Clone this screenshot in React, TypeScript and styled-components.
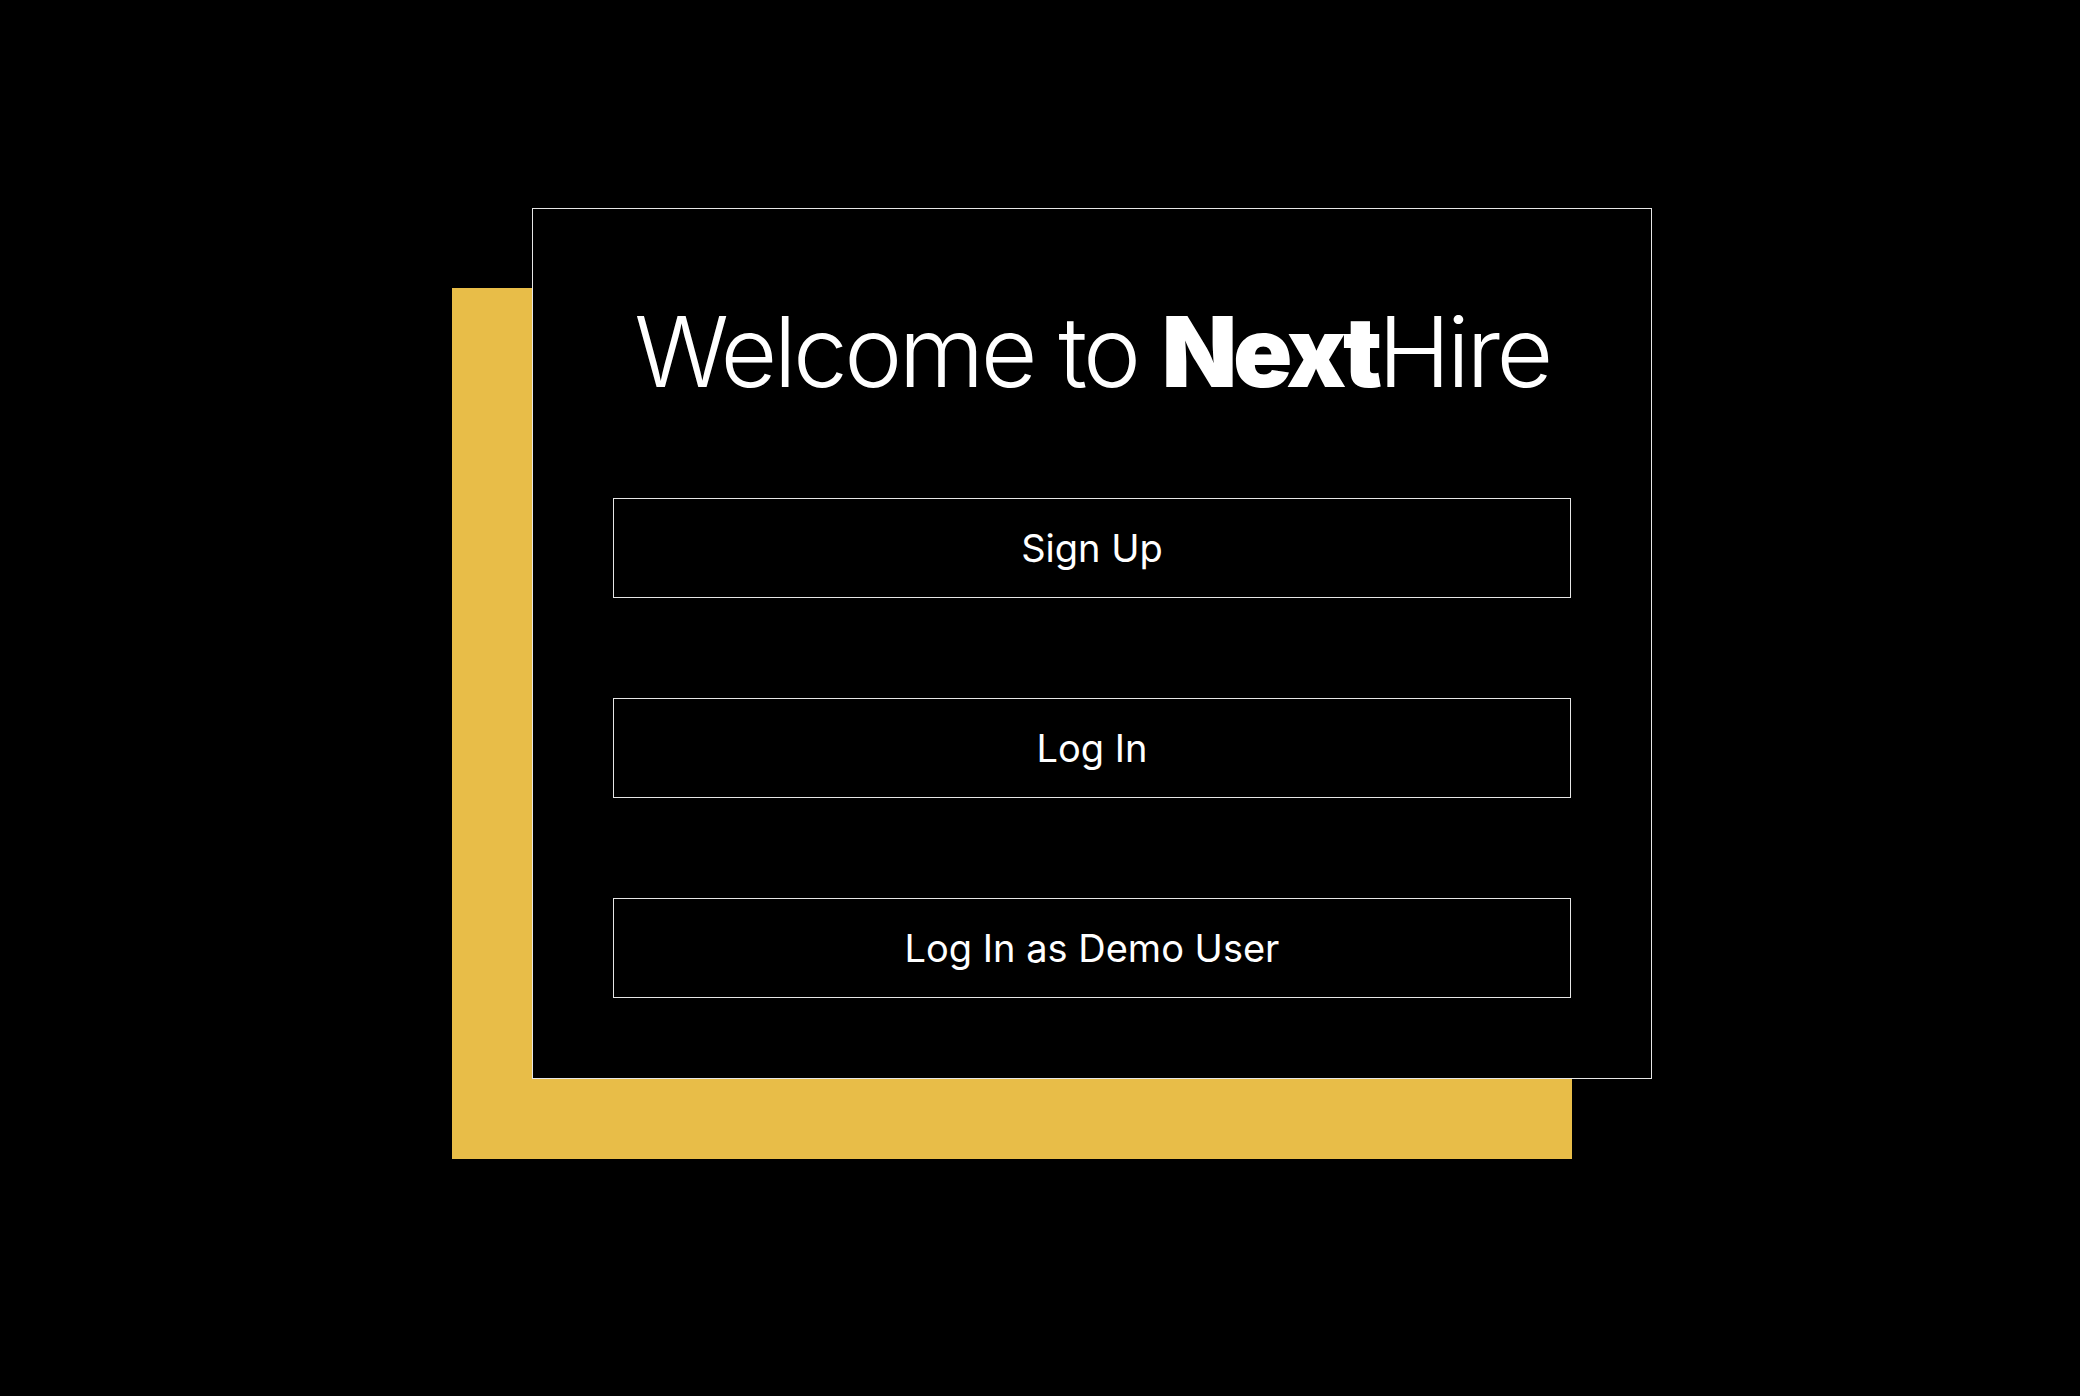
import React from "react";
import styled, { createGlobalStyle } from "styled-components";

const Global = createGlobalStyle`
  html, body { margin: 0; padding: 0; background: #000; }
  body { font-family: Inter, "Liberation Sans", sans-serif; color: #fff; }
  * { box-sizing: border-box; }
`;

const Page = styled.main`
  min-height: 1396px;
  background: #000;
  display: flex;
  align-items: flex-start;
  justify-content: flex-start;
  padding: 208px 0 0 532px;
`;

const Card = styled.section`
  width: 1120px;
  height: 871px;
  background: #000;
  border: 1px solid #e6e6e6;
  box-shadow: -80px 80px 0 0 #e8bd48;
  padding: 0 80px;
  display: flex;
  flex-direction: column;
  align-items: stretch;
`;

const Title = styled.h1`
  margin: 93px 0 96px;
  height: 100px;
  line-height: 100px;
  font-size: 98px;
  font-weight: 300;
  text-align: center;
  white-space: nowrap;
  color: #fff;
`;

const Brand = styled.span<{ $bold?: boolean }>`
  font-weight: ${(p) => (p.$bold ? 900 : 300)};
  letter-spacing: ${(p) => (p.$bold ? "-0.042em" : "-0.036em")};
`;

const Actions = styled.div`
  display: flex;
  flex-direction: column;
  gap: 100px;
`;

const ActionButton = styled.button`
  height: 100px;
  width: 100%;
  background: #000;
  border: 1px solid #e6e6e6;
  color: #fff;
  font-family: Inter, "Liberation Sans", sans-serif;
  font-size: 38px;
  font-weight: 400;
  letter-spacing: 0;
  cursor: pointer;
  display: flex;
  align-items: center;
  justify-content: center;
  padding: 0;
`;

export default function App() {
  return (
    <>
      <Global />
      <Page>
        <Card>
          <Title>
            <Brand>Welcome to </Brand>
            <Brand $bold>Next</Brand>
            <Brand>Hire</Brand>
          </Title>
          <Actions>
            <ActionButton>Sign Up</ActionButton>
            <ActionButton>Log In</ActionButton>
            <ActionButton>Log In as Demo User</ActionButton>
          </Actions>
        </Card>
      </Page>
    </>
  );
}
